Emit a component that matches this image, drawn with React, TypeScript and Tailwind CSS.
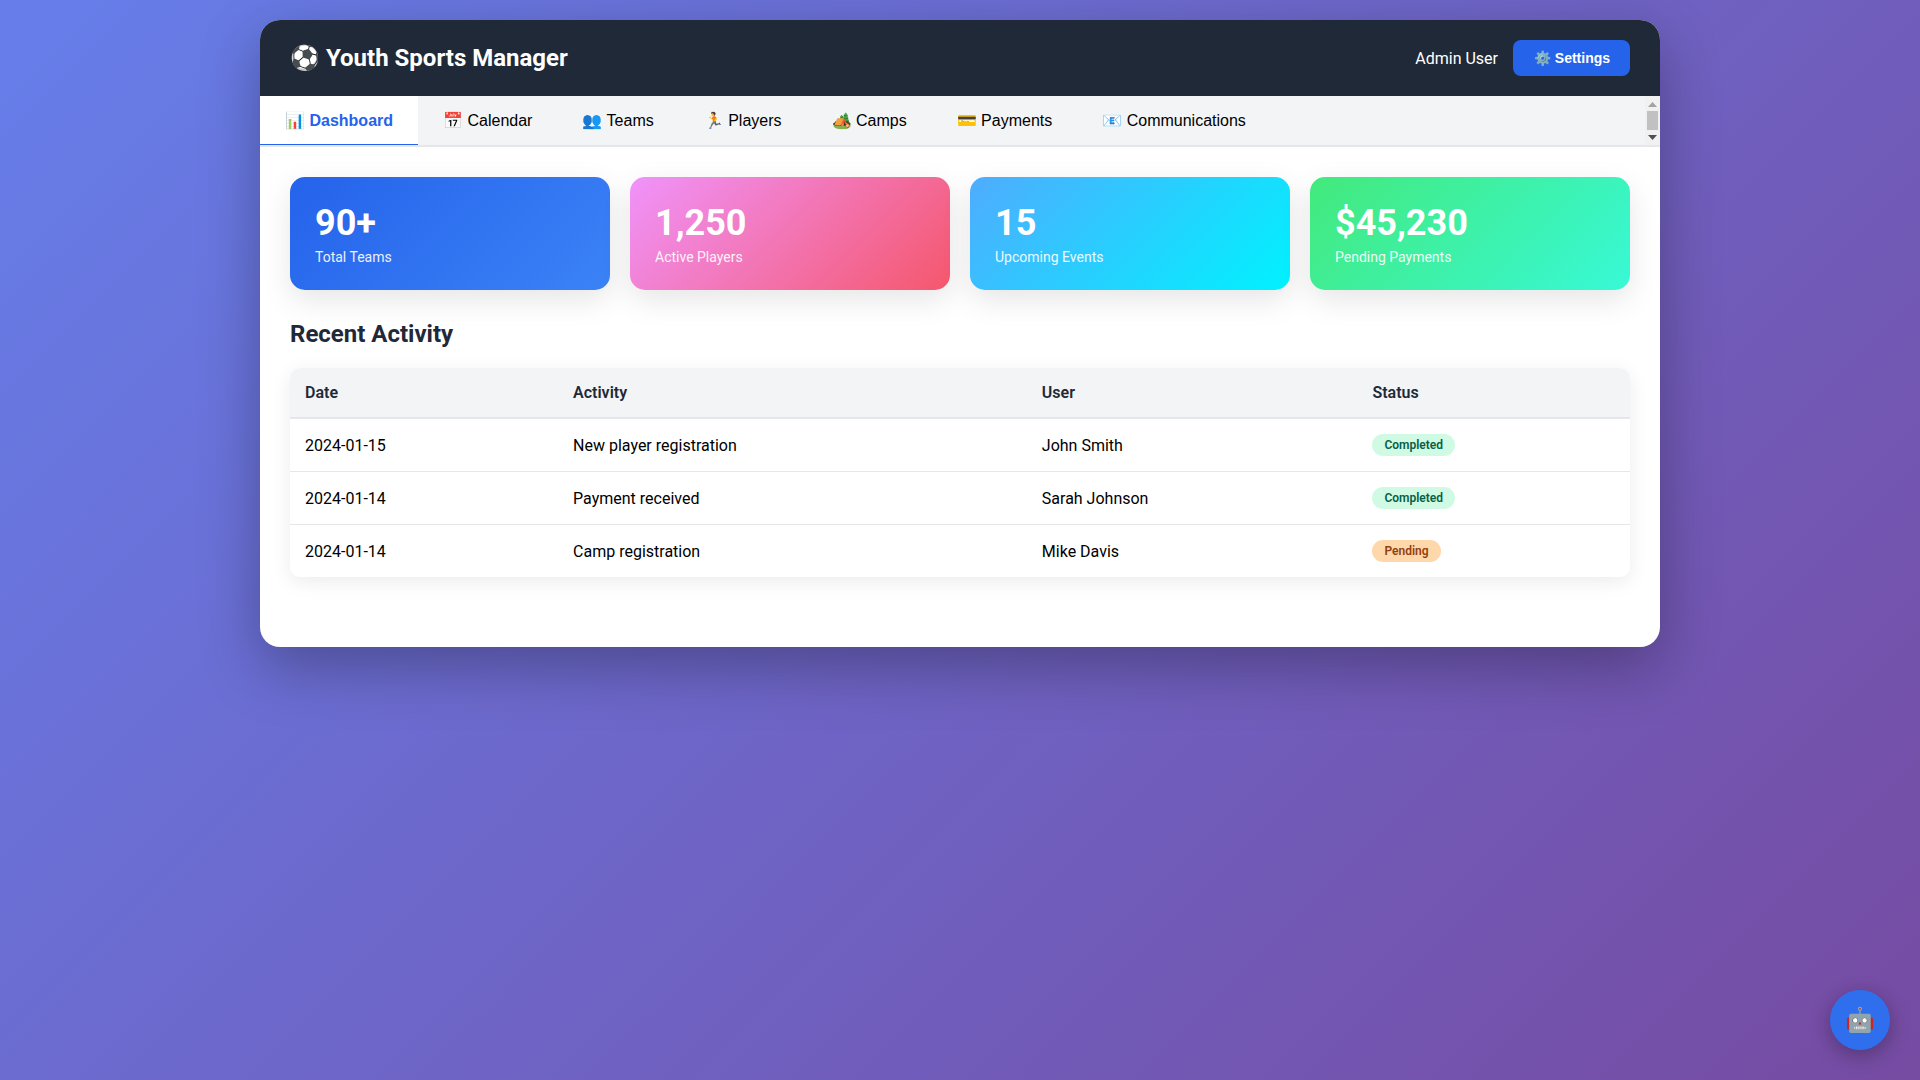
import React from "react";

const tabs = [
  ["📊", "Dashboard"],
  ["📅", "Calendar"],
  ["👥", "Teams"],
  ["🏃", "Players"],
  ["🏕️", "Camps"],
  ["💳", "Payments"],
  ["📧", "Communications"],
];

const stats = [
  ["90+", "Total Teams", "bg-[linear-gradient(135deg,#2563eb_0%,#3b82f6_100%)]"],
  ["1,250", "Active Players", "bg-[linear-gradient(135deg,#f093fb_0%,#f5576c_100%)]"],
  ["15", "Upcoming Events", "bg-[linear-gradient(135deg,#4facfe_0%,#00f2fe_100%)]"],
  ["$45,230", "Pending Payments", "bg-[linear-gradient(135deg,#43e97b_0%,#38f9d7_100%)]"],
];

const rows = [
  ["2024-01-15", "New player registration", "John Smith", "Completed"],
  ["2024-01-14", "Payment received", "Sarah Johnson", "Completed"],
  ["2024-01-14", "Camp registration", "Mike Davis", "Pending"],
];

export default function App() {
  return (
    <div className="min-h-screen bg-[linear-gradient(135deg,#667eea_0%,#764ba2_100%)] pt-5 font-['Roboto',sans-serif] leading-[normal] text-black">
      <div className="mx-auto w-[1400px] overflow-hidden rounded-[20px] bg-white shadow-[0_20px_60px_rgba(0,0,0,0.3)]">
        <header className="flex h-[76px] items-center justify-between bg-[#1f2937] px-[30px] text-white">
          <h1 className="text-[24px] font-bold">⚽ Youth Sports Manager</h1>
          <div className="flex items-center gap-[15px]">
            <span className="text-[16px]">Admin User</span>
            <button className="h-9 w-[117px] rounded-lg bg-[#2563eb] pl-[1px] font-['Liberation_Sans',sans-serif] text-[14px] font-bold text-white">
              ⚙️ Settings
            </button>
          </div>
        </header>

        <div className="relative">
          <nav className="flex overflow-x-auto border-b-2 border-[#e5e7eb] bg-[#f3f4f6]">
            {tabs.map(([icon, label], i) => (
              <button
                key={label}
                className={
                  i === 0
                    ? "-mb-[2px] shrink-0 border-b-[3px] border-[#2563eb] bg-white px-[25px] pt-[16px] pb-[14px] font-['Liberation_Sans',sans-serif] text-[16px] leading-[18px] font-bold whitespace-nowrap text-[#2563eb]"
                    : "-mb-[2px] shrink-0 border-b-[3px] border-transparent px-[25px] pt-[16px] pb-[14px] font-['Liberation_Sans',sans-serif] text-[16px] leading-[18px] whitespace-nowrap text-black"
                }
              >
                {icon} {label}
              </button>
            ))}
          </nav>
          <div className="absolute top-0 right-0 flex h-[49px] w-[15px] flex-col items-center bg-[#f1f1f1] pt-[6px]">
            <svg width="9" height="5" viewBox="0 0 9 5" className="block">
              <path d="M4.5 0 L9 5 L0 5 Z" fill="#a3a3a3" />
            </svg>
            <div className="mt-[4px] h-[19px] w-[11px] bg-[#c1c1c1]" />
            <svg width="9" height="5" viewBox="0 0 9 5" className="mt-[5px] block">
              <path d="M0 0 L9 0 L4.5 5 Z" fill="#505050" />
            </svg>
          </div>
        </div>

        <main className="p-[30px]">
          <div className="mb-[30px] grid grid-cols-4 gap-5">
            {stats.map(([value, label, bg]) => (
              <div
                key={label}
                className={`rounded-[15px] p-[25px] text-white shadow-[0_10px_30px_rgba(0,0,0,0.1)] ${bg}`}
              >
                <div className="text-[36px] font-bold">{value}</div>
                <div className="mt-[5px] text-[14px] opacity-90">{label}</div>
              </div>
            ))}
          </div>

          <h2 className="mb-[20px] text-[24px] font-bold text-[#1f2937]">Recent Activity</h2>

          <div className="mb-10 overflow-hidden rounded-[10px] shadow-[0_5px_20px_rgba(0,0,0,0.08)]">
            <table className="w-full border-collapse bg-white">
              <thead>
                <tr className="border-b-2 border-[#e5e7eb] bg-[#f3f4f6]">
                  {["Date", "Activity", "User", "Status"].map((h) => (
                    <th key={h} className="p-[15px] text-left text-[16px] font-semibold text-[#1f2937]">
                      {h}
                    </th>
                  ))}
                </tr>
              </thead>
              <tbody>
                {rows.map((r, i) => (
                  <tr key={i} className={i < 2 ? "border-b border-[#e5e7eb]" : ""}>
                    <td className="p-[15px] text-[16px]">{r[0]}</td>
                    <td className="p-[15px] text-[16px]">{r[1]}</td>
                    <td className="p-[15px] text-[16px]">{r[2]}</td>
                    <td className="p-[15px] text-[16px]">
                      <span
                        className={
                          r[3] === "Completed"
                            ? "inline-block rounded-[20px] bg-[#d1fae5] px-3 py-1 text-[12px] font-semibold text-[#065f46]"
                            : "inline-block rounded-[20px] bg-[#fed7aa] px-3 py-1 text-[12px] font-semibold text-[#92400e]"
                        }
                      >
                        {r[3]}
                      </span>
                    </td>
                  </tr>
                ))}
              </tbody>
            </table>
          </div>
        </main>
      </div>

      <button className="fixed right-[30px] bottom-[30px] flex h-[60px] w-[60px] items-center justify-center rounded-full bg-[#2f6fed] text-[24px] shadow-[0_5px_20px_rgba(0,0,0,0.3)]">
        🤖
      </button>
    </div>
  );
}
